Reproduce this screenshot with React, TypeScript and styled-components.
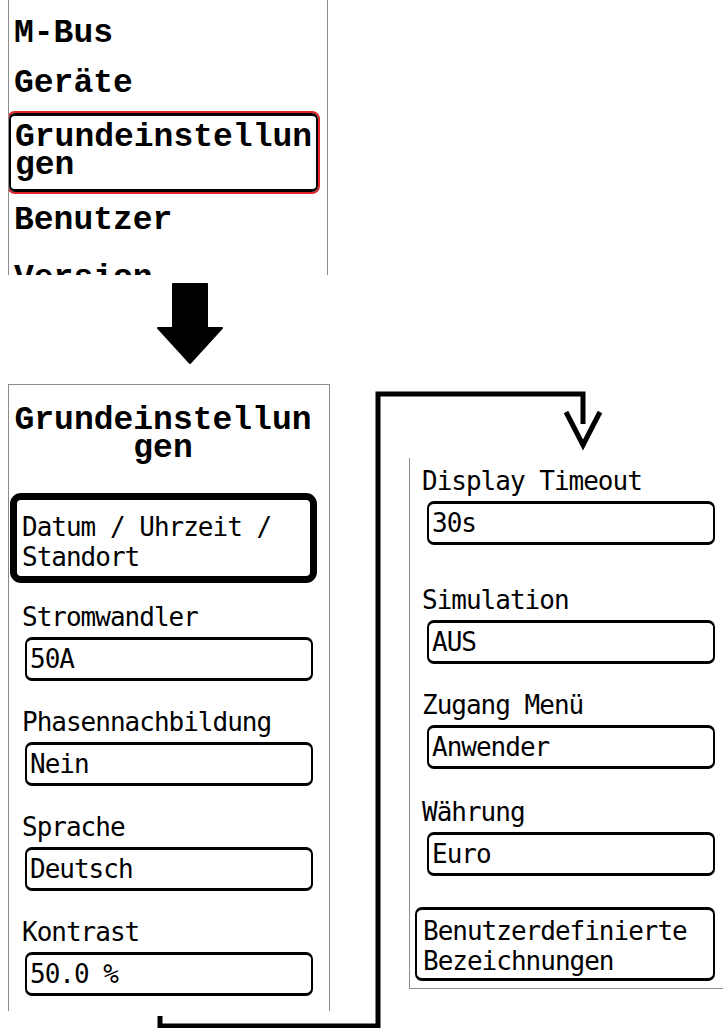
import styled, { createGlobalStyle } from "styled-components";

// Two device screens: the main menu, and the "Grundeinstellungen" page split in two columns

const GlobalStyle = createGlobalStyle`
  html, body {
    margin: 0;
    padding: 0;
    background: #fff;
  }
  body {
    font-family: "DejaVu Sans Mono", monospace;
    color: #000;
  }
`;

const Page = styled.div`
  position: relative;
  width: 723px;
  height: 1028px;
  overflow: hidden;
  background: #fff;
`;

// top screen (menu list, cut off at the bottom)
const MenuPanel = styled.div`
  margin-left: 8px;
  width: 320px;
  height: 275px;
  box-sizing: border-box;
  border-left: 1px solid #8c8c8c;
  border-right: 1px solid #8c8c8c;
  overflow: hidden;
  padding: 20px 0 0 5px;
  display: flex;
  flex-direction: column;
  gap: 22px;
`;

const MenuItem = styled.div<{ $active?: boolean; $push?: number }>`
  font-family: "Liberation Mono", monospace;
  font-weight: 700;
  font-size: 33px;
  line-height: 28px;
  width: 298px;
  flex-shrink: 0;
  word-break: break-all;
  margin-top: ${(p) => p.$push ?? 0}px;
  ${(p) =>
    p.$active &&
    `
    margin: -7px 0 -7px -5px;
    width: 309px;
    box-sizing: border-box;
    padding: 8px 0 9px 4px;
    border: 3px solid #000;
    border-left-width: 2px;
    border-right-width: 2px;
    border-radius: 6px;
    box-shadow: 0 0 0 2px #e3262b;
  `}
`;

const ArrowRow = styled.div`
  height: 109px;
  padding: 8px 0 0 157px;
  box-sizing: border-box;

  svg {
    display: block;
  }
`;

const Screens = styled.div`
  display: flex;
  align-items: flex-start;
`;

const LeftPanel = styled.div`
  flex-shrink: 0;
  margin-left: 8px;
  width: 322px;
  height: 627px;
  box-sizing: border-box;
  border: 1px solid #8c8c8c;
  border-bottom: none;
  padding-top: 22px;
`;

const RightPanel = styled.div`
  flex-shrink: 0;
  margin: 74px 0 0 79px;
  width: 330px;
  box-sizing: border-box;
  border-left: 1px solid #8c8c8c;
  border-bottom: 1px solid #8c8c8c;
  padding: 8px 0 7px;
`;

const Title = styled.div`
  font-family: "Liberation Mono", monospace;
  font-weight: 700;
  font-size: 33px;
  line-height: 28px;
  width: 298px;
  margin-left: 5px;
  text-align: center;
  word-break: break-all;
`;

const SelectedItem = styled.div`
  margin: 30px 0 0 1px;
  width: 307px;
  box-sizing: border-box;
  border: 7px solid #000;
  border-radius: 11px;
  padding: 12px 4px 4px 5px;
  font-size: 26px;
  letter-spacing: -1px;
  line-height: 30px;
`;

const Field = styled.div<{ $gap: number }>`
  margin-top: ${(p) => p.$gap}px;
`;

const Label = styled.div<{ $indent: number }>`
  padding-left: ${(p) => p.$indent}px;
  font-size: 26px;
  letter-spacing: -1px;
  line-height: 30px;
  white-space: nowrap;
`;

const ValueBox = styled.div<{ $indent: number }>`
  margin: 5px 0 0 ${(p) => p.$indent}px;
  width: 288px;
  height: 44px;
  box-sizing: border-box;
  border: 3px solid #000;
  border-left-width: 2px;
  border-right-width: 2px;
  border-radius: 7px;
  padding-left: 3px;
  font-size: 26px;
  letter-spacing: -1px;
  line-height: 38px;
  white-space: nowrap;
`;

const LinkBox = styled.div`
  margin: 31px 0 0 5px;
  width: 300px;
  box-sizing: border-box;
  border: 3px solid #000;
  border-left-width: 2px;
  border-right-width: 2px;
  border-radius: 7px;
  padding: 6px 0 2px 6px;
  font-size: 26px;
  letter-spacing: -1px;
  line-height: 30px;
`;

const Connector = styled.svg`
  position: absolute;
  left: 0;
  top: 0;
  pointer-events: none;
`;

const leftFields = [
  { label: "Stromwandler", value: "50A", gap: 19 },
  { label: "Phasennachbildung", value: "Nein", gap: 26 },
  { label: "Sprache", value: "Deutsch", gap: 26 },
  { label: "Kontrast", value: "50.0 %", gap: 26 },
];

const rightFields = [
  { label: "Display Timeout", value: "30s", gap: 0 },
  { label: "Simulation", value: "AUS", gap: 40 },
  { label: "Zugang Menü", value: "Anwender", gap: 26 },
  { label: "Währung", value: "Euro", gap: 28 },
];

export default function App() {
  return (
    <Page>
      <GlobalStyle />

      <MenuPanel>
        <MenuItem>M-Bus</MenuItem>
        <MenuItem>Geräte</MenuItem>
        <MenuItem $active>Grundeinstellungen</MenuItem>
        <MenuItem>Benutzer</MenuItem>
        <MenuItem $push={8}>Version</MenuItem>
      </MenuPanel>

      <ArrowRow>
        <svg width="66" height="82" viewBox="0 0 66 82">
          <path
            d="M16 1 H50 V45 H65 L33 80 L1 45 H16 Z"
            fill="#000"
            stroke="#000"
            strokeWidth="2"
            strokeLinejoin="round"
          />
        </svg>
      </ArrowRow>

      <Screens>
        <LeftPanel>
          <Title>Grundeinstellungen</Title>
          <SelectedItem>
            Datum / Uhrzeit /<br />
            Standort
          </SelectedItem>
          {leftFields.map((f) => (
            <Field key={f.label} $gap={f.gap}>
              <Label $indent={13}>{f.label}</Label>
              <ValueBox $indent={16}>{f.value}</ValueBox>
            </Field>
          ))}
        </LeftPanel>

        <RightPanel>
          {rightFields.map((f) => (
            <Field key={f.label} $gap={f.gap}>
              <Label $indent={12}>{f.label}</Label>
              <ValueBox $indent={17}>{f.value}</ValueBox>
            </Field>
          ))}
          <LinkBox>
            Benutzerdefinierte
            <br />
            Bezeichnungen
          </LinkBox>
        </RightPanel>
      </Screens>

      <Connector width="723" height="1028" viewBox="0 0 723 1028">
        <path
          d="M160 1016 V1026 H378 V394 H583 V424"
          fill="none"
          stroke="#000"
          strokeWidth="5"
        />
        <path
          d="M566 412 L583 445 L600 412"
          fill="none"
          stroke="#000"
          strokeWidth="5"
        />
      </Connector>
    </Page>
  );
}
